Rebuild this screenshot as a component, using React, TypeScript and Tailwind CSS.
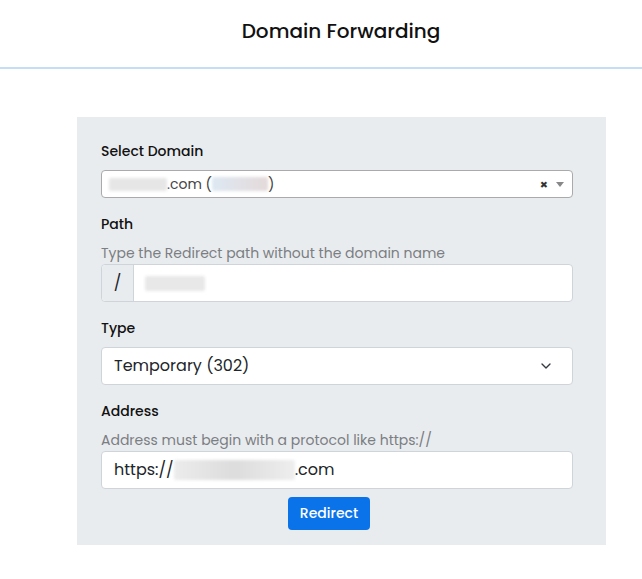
import { ChevronDown } from 'lucide-react'

const font = { fontFamily: 'Poppins, Inter, "Noto Sans", sans-serif' }

function Blur({ className }: { className: string }) {
  // stand-in for the redacted (blurred) parts of the screenshot
  return <span className={`inline-block rounded-[2px] blur-[1.5px] ${className}`} />
}

function Label({ children }: { children: React.ReactNode }) {
  return <div className="text-[14px] font-medium leading-[21px] text-[#111]">{children}</div>
}

function Help({ children }: { children: React.ReactNode }) {
  return <div className="mt-2 text-[14px] leading-[21px] text-[#7b7e82]">{children}</div>
}

export default function App() {
  return (
    <div className="min-h-[579px] bg-white" style={font}>
      <header className="flex h-[69px] items-start justify-center border-b-2 border-[#c7ddf5] pl-[40px] pt-[18px]">
        <h1 className="text-[20px] font-medium leading-[26px] text-[#111]">Domain Forwarding</h1>
      </header>

      <div className="ml-[77px] mt-[48px] w-[529px] bg-[#e9ecef] pb-[15px] pl-6 pr-[33px] pt-6">
        <Label>Select Domain</Label>
        <div className="mt-2 flex h-[28px] items-center rounded-[4px] border border-[#aaa] bg-white pl-[7px] pr-2 text-[14px] text-[#444]">
          <Blur className="h-[13px] w-[58px] bg-[#e6e6e6]" />
          <span>.com (</span>
          <Blur className="h-[14px] w-[56px] bg-gradient-to-r from-[#dde8f2] to-[#e4dada]" />
          <span>)</span>
          <span className="ml-auto mr-[8px] text-[13px] font-bold leading-none text-[#333]">×</span>
          <span className="h-0 w-0 border-x-[4px] border-t-[5px] border-x-transparent border-t-[#888]" />
        </div>

        <div className="mt-4">
          <Label>Path</Label>
          <Help>Type the Redirect path without the domain name</Help>
          <div className="flex h-[38px] rounded-[4px] border border-[#ced4da] bg-white">
            <span className="flex w-[32px] items-center justify-center rounded-l-[4px] border-r border-[#ced4da] bg-[#e9ecef] text-[16px] text-[#212529]">
              /
            </span>
            <span className="flex items-center pl-[11px]">
              <Blur className="h-[15px] w-[60px] bg-[#e8e8e8]" />
            </span>
          </div>
        </div>

        <div className="mt-4">
          <Label>Type</Label>
          <div className="mt-2 flex h-[38px] items-center rounded-[4px] border border-[#ced4da] bg-white pl-3 pr-[18px] text-[16px] text-[#212529]">
            Temporary (302)
            <ChevronDown className="ml-auto size-[16px] text-[#343a40]" strokeWidth={2} />
          </div>
        </div>

        <div className="mt-4">
          <Label>Address</Label>
          <Help>Address must begin with a protocol like https://</Help>
          <div className="flex h-[38px] items-center rounded-[4px] border border-[#ced4da] bg-white pl-3 text-[16px] text-[#212529]">
            https://
            <Blur className="h-[20px] w-[121px] bg-gradient-to-r from-[#ececec] via-[#dcdcdc] to-[#eeeeee]" />
            .com
          </div>
        </div>

        <div className="mt-2 flex justify-center pr-4">
          <button className="h-[33px] rounded-[4px] bg-[#0b73ea] px-[12px] text-[14px] font-medium text-white">
            Redirect
          </button>
        </div>
      </div>
    </div>
  )
}
